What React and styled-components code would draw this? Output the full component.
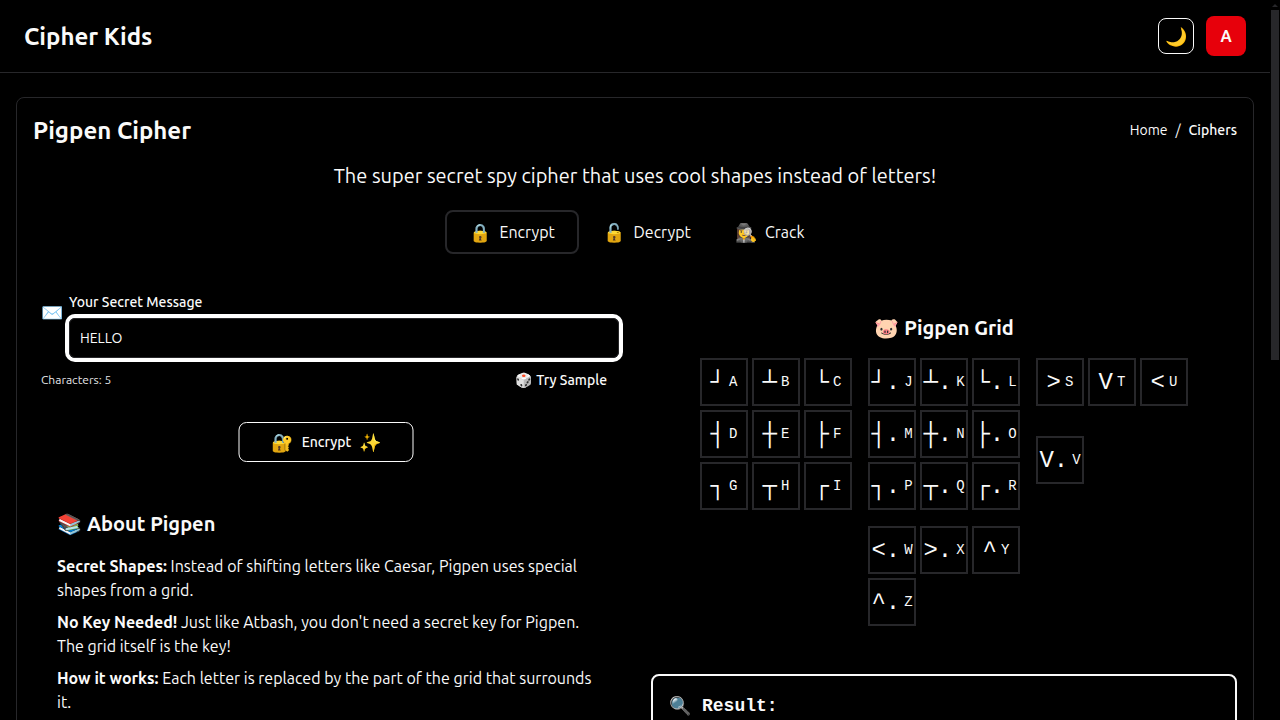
import React from "react";
import styled, { createGlobalStyle } from "styled-components";

const Global = createGlobalStyle`
  *, *::before, *::after { box-sizing: border-box; }
  body { margin: 0; background: #000; overflow: hidden; }
  h1, h2, h3, p { margin: 0; }
  button, input { font: inherit; color: inherit; background: none; border: 0; padding: 0; }
`;

const line = "#27272a";

const Viewport = styled.div`
  display: flex;
  height: 720px;
  overflow: hidden;
  background: #000;
  color: #fafafa;
  font-family: Ubuntu, "Noto Sans", "Open Sans", "Noto Color Emoji", sans-serif;
  font-size: 16px;
  line-height: 24px;
`;
const Page = styled.div`
  flex: 1;
  min-width: 0;
  display: flex;
  flex-direction: column;
`;
const ScrollTrack = styled.div`
  width: 10px;
  padding: 4px 1px 0;
  display: flex;
  flex-direction: column;
  align-items: center;
`;
const ScrollArrow = styled.div`
  border: 3px solid transparent;
  border-top: 0;
  border-bottom: 3px solid ${line};
  margin-bottom: 3px;
`;
const ScrollThumb = styled.div`
  width: 8px;
  height: 350px;
  background: ${line};
`;
const Header = styled.header`
  flex: none;
  height: 73px;
  padding: 0 24px;
  display: flex;
  align-items: center;
  gap: 12px;
  border-bottom: 1px solid ${line};
`;
const Title = styled.h1`
  flex: 1;
  padding-top: 2px;
  font-size: 24px;
  line-height: 32px;
  font-weight: 600;
`;
const ThemeButton = styled.button`
  width: 36px;
  height: 36px;
  padding-top: 2px;
  border: 1px solid #fafafa;
  border-radius: 8px;
  display: grid;
  place-items: center;
  font-size: 18px;
  line-height: 28px;
`;
const Avatar = styled.div`
  width: 40px;
  height: 40px;
  border-radius: 8px;
  background: #e7000b;
  display: grid;
  place-items: center;
  font-weight: 600;
`;
const Card = styled.main`
  flex: none;
  height: 900px;
  margin: 24px 16px 0;
  padding: 15px 16px 16px;
  border: 1px solid ${line};
  border-radius: 8px;
`;
const CardHead = styled.div`
  display: flex;
  align-items: center;
`;
const Crumbs = styled.nav`
  display: flex;
  gap: 8px;
  font-size: 14px;
  line-height: 20px;
`;
const Current = styled.span`
  font-weight: 500;
`;
const Tagline = styled.p`
  margin-top: 15px;
  text-align: center;
  font-size: 20px;
  line-height: 28px;
`;
const Tabs = styled.div`
  margin-top: 20px;
  height: 44px;
  display: flex;
  justify-content: center;
`;
const Tab = styled.button`
  width: ${(p) => p.$width}px;
  border: 2px solid ${(p) => (p.$active ? line : "transparent")};
  border-radius: 8px;
  display: flex;
  align-items: center;
  gap: 8px;
  padding-left: 22px;
`;
const Columns = styled.div`
  display: flex;
  gap: 12px;
`;
const Left = styled.section`
  width: 606px;
  padding: 38px 8px 0;
`;
const Field = styled.div`
  display: flex;
  gap: 8px;
`;
const FieldIcon = styled.span`
  width: 20px;
  padding-top: 9px;
`;
const FieldBody = styled.div`
  width: 550px;
`;
const Label = styled.label`
  display: block;
  font-size: 14px;
  line-height: 20px;
  font-weight: 500;
  margin-bottom: 6px;
`;
const Input = styled.input`
  display: block;
  width: 100%;
  height: 40px;
  padding: 0 10px;
  border: 1px solid ${line};
  border-radius: 6px;
  box-shadow: 0 0 0 4px #fff;
  outline: none;
  font-size: 14px;
`;
const Meta = styled.div`
  display: flex;
  align-items: center;
  justify-content: space-between;
  margin: 12px 24px 0 0;
  font-size: 12px;
  line-height: 20px;
  color: #e4e4e7;
`;
const Sample = styled.button`
  font-size: 14px;
  font-weight: 500;
  color: #fafafa;
`;
const Submit = styled.button`
  display: flex;
  align-items: center;
  justify-content: center;
  gap: 8px;
  width: 175px;
  height: 40px;
  margin: 32px 0 0 197px;
  transform: translateX(0.5px);
  border: 1px solid #fafafa;
  border-radius: 8px;
  font-size: 14px;
  font-weight: 500;
`;
const Emoji = styled.span`
  width: ${(p) => p.$width || 22}px;
  padding-top: ${(p) => (p.$low ? 2 : 0)}px;
  font-family: "Noto Color Emoji", sans-serif;
  font-size: ${(p) => p.$size || 18}px;
  font-weight: 400;
  white-space: nowrap;
`;
const About = styled.div`
  padding: 48px 8px 0 16px;
`;
const SubHead = styled.h2`
  display: flex;
  justify-content: ${(p) => (p.$center ? "center" : "flex-start")};
  gap: 5px;
  font-size: 20px;
  line-height: 28px;
  font-weight: 600;
`;
const Para = styled.p`
  margin-top: ${(p) => (p.$first ? 16 : 8)}px;
  white-space: nowrap;
  b { font-weight: 600; }
`;
const Right = styled.section`
  width: 586px;
  padding-top: 60px;
`;
const Groups = styled.div`
  display: flex;
  flex-wrap: wrap;
  justify-content: center;
  gap: 16px;
  margin-top: 16px;
`;
const Group = styled.div`
  display: grid;
  grid-template-columns: repeat(3, 48px);
  gap: 4px;
`;
const Cell = styled.div`
  width: 48px;
  height: 48px;
  border: 2px solid ${line};
  display: flex;
  align-items: center;
  justify-content: center;
  gap: 4px;
  font-family: "Liberation Mono", monospace;
  white-space: nowrap;
`;
const Shape = styled.span`
  padding-top: 2px;
  font-size: 24px;
  line-height: 32px;
`;
const Letter = styled.span`
  font-size: 14px;
  line-height: 20px;
`;
const Result = styled.div`
  margin-top: 48px;
  height: 200px;
  padding: 16px;
  border: 2px solid #fafafa;
  border-radius: 8px;
  display: flex;
  gap: 11px;
  font-family: "Liberation Mono", monospace;
  font-size: 18px;
  line-height: 28px;
  font-weight: 700;
`;

const groups = [
  [["┘", "A"], ["┴", "B"], ["└", "C"], ["┤", "D"], ["┼", "E"], ["├", "F"], ["┐", "G"], ["┬", "H"], ["┌", "I"]],
  [["┘.", "J"], ["┴.", "K"], ["└.", "L"], ["┤.", "M"], ["┼.", "N"], ["├.", "O"], ["┐.", "P"], ["┬.", "Q"], ["┌.", "R"]],
  [[">", "S"], ["V", "T"], ["<", "U"], ["V.", "V"]],
  [["<.", "W"], [">.", "X"], ["^", "Y"], ["^.", "Z"]],
];

export default function App() {
  return (
    <Viewport>
      <Global />
      <Page>
        <Header>
          <Title>Cipher Kids</Title>
          <ThemeButton><Emoji>🌙</Emoji></ThemeButton>
          <Avatar>A</Avatar>
        </Header>
        <Card>
          <CardHead>
            <Title>Pigpen Cipher</Title>
            <Crumbs><span>Home</span><span>/</span><Current>Ciphers</Current></Crumbs>
          </CardHead>
          <Tagline>The super secret spy cipher that uses cool shapes instead of letters!</Tagline>
          <Tabs>
            <Tab $active $width={134}><Emoji $low $width={22.5}>🔒</Emoji>Encrypt</Tab>
            <Tab $width={132}><Emoji $low $width={22.5}>🔓</Emoji>Decrypt</Tab>
            <Tab $width={114}><Emoji $low>🕵️‍♀️</Emoji>Crack</Tab>
          </Tabs>
          <Columns>
            <Left>
              <Field>
                <FieldIcon><Emoji>✉️</Emoji></FieldIcon>
                <FieldBody>
                  <Label>Your Secret Message</Label>
                  <Input defaultValue="HELLO" />
                </FieldBody>
              </Field>
              <Meta>
                <span>Characters: 5</span>
                <Sample>🎲 Try Sample</Sample>
              </Meta>
              <Submit><Emoji $low $width={22}>🔐</Emoji>Encrypt<Emoji $low $width={21}>✨</Emoji></Submit>
              <About>
                <SubHead><Emoji $size={20} $width={25}>📚</Emoji>About Pigpen</SubHead>
                <Para $first><b>Secret Shapes:</b> Instead of shifting letters like Caesar, Pigpen uses special<br />shapes from a grid.</Para>
                <Para><b>No Key Needed!</b> Just like Atbash, you don't need a secret key for Pigpen.<br />The grid itself is the key!</Para>
                <Para><b>How it works:</b> Each letter is replaced by the part of the grid that surrounds<br />it.</Para>
              </About>
            </Left>
            <Right>
              <SubHead $center><Emoji $size={20} $width={25}>🐷</Emoji>Pigpen Grid</SubHead>
              <Groups>
                {groups.map((cells, i) => (
                  <Group key={i}>
                    {cells.map(([shape, letter]) => (
                      <Cell key={letter}><Shape>{shape}</Shape><Letter>{letter}</Letter></Cell>
                    ))}
                  </Group>
                ))}
              </Groups>
              <Result><Emoji>🔍</Emoji>Result:</Result>
            </Right>
          </Columns>
        </Card>
      </Page>
      <ScrollTrack><ScrollArrow /><ScrollThumb /></ScrollTrack>
    </Viewport>
  );
}
